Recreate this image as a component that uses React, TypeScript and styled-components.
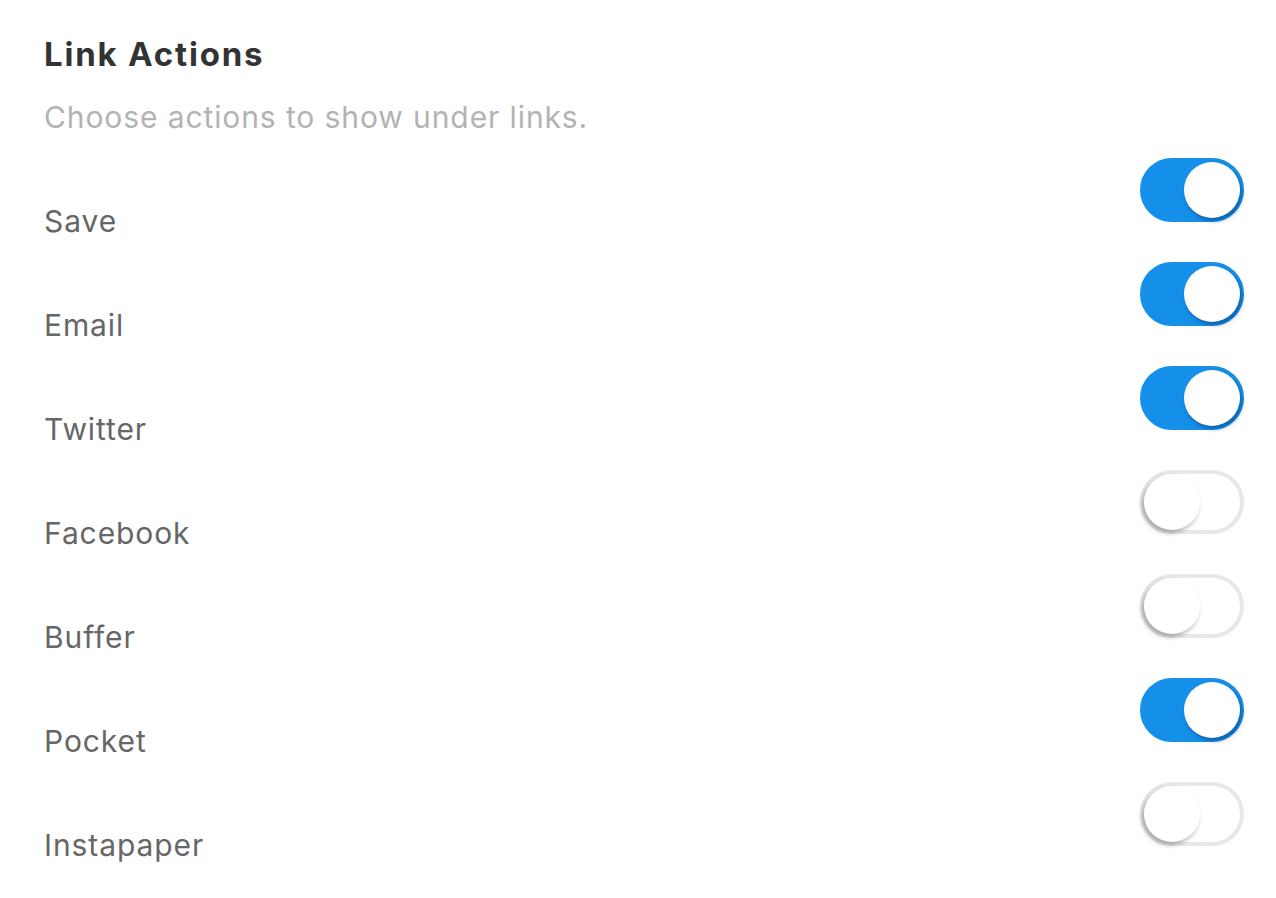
import React, { useState } from "react";
import styled, { createGlobalStyle } from "styled-components";

const Global = createGlobalStyle`
  html, body { margin: 0; padding: 0; background: #ffffff; }
  body { font-family: Inter, "Noto Sans", sans-serif; -webkit-font-smoothing: antialiased; }
`;

const Page = styled.div`
  padding: 30px 32px 0 44px;
  display: flex;
  flex-direction: column;
`;

const Title = styled.h1`
  margin: 0;
  font-size: 33px;
  line-height: 48px;
  font-weight: 700;
  letter-spacing: 1.8px;
  color: #333333;
`;

const Subtitle = styled.p`
  margin: 19px 0 0;
  font-size: 30px;
  line-height: 40px;
  font-weight: 400;
  letter-spacing: 0.9px;
  color: #b3b3b3;
`;

const List = styled.div`
  display: flex;
  flex-direction: column;
  margin-top: 21px;
`;

const Row = styled.div`
  height: 104px;
  display: flex;
  justify-content: space-between;
  align-items: flex-start;
`;

const Label = styled.span`
  margin-top: 43px;
  font-size: 30px;
  line-height: 40px;
  letter-spacing: 0.9px;
  color: #666666;
`;

const Track = styled.button<{ $on: boolean }>`
  position: relative;
  width: 104px;
  height: 64px;
  padding: 0;
  border-radius: 32px;
  border: 4px solid ${(p) => (p.$on ? "#1590ea" : "#e8e8e8")};
  background: ${(p) => (p.$on ? "#1590ea" : "#ffffff")};
  box-sizing: border-box;
  cursor: pointer;
  flex-shrink: 0;
`;

const Knob = styled.span<{ $on: boolean }>`
  position: absolute;
  top: 0;
  left: ${(p) => (p.$on ? "40px" : "0px")};
  width: 56px;
  height: 56px;
  border-radius: 50%;
  background: #ffffff;
  box-shadow: ${(p) =>
    p.$on ? "2px 3px 4px rgba(0, 40, 90, 0.45)" : "-2px 3px 5px rgba(0, 0, 0, 0.3)"};
`;

const items: [string, boolean][] = [
  ["Save", true],
  ["Email", true],
  ["Twitter", true],
  ["Facebook", false],
  ["Buffer", false],
  ["Pocket", true],
  ["Instapaper", false],
];

export default function App() {
  const [state, setState] = useState(items.map((i) => i[1]));
  return (
    <Page>
      <Global />
      <Title>Link Actions</Title>
      <Subtitle>Choose actions to show under links.</Subtitle>
      <List>
        {items.map(([name], i) => (
          <Row key={name}>
            <Label>{name}</Label>
            <Track
              $on={state[i]}
              aria-label={name}
              onClick={() => setState((s) => s.map((v, j) => (j === i ? !v : v)))}
            >
              <Knob $on={state[i]} />
            </Track>
          </Row>
        ))}
      </List>
    </Page>
  );
}
